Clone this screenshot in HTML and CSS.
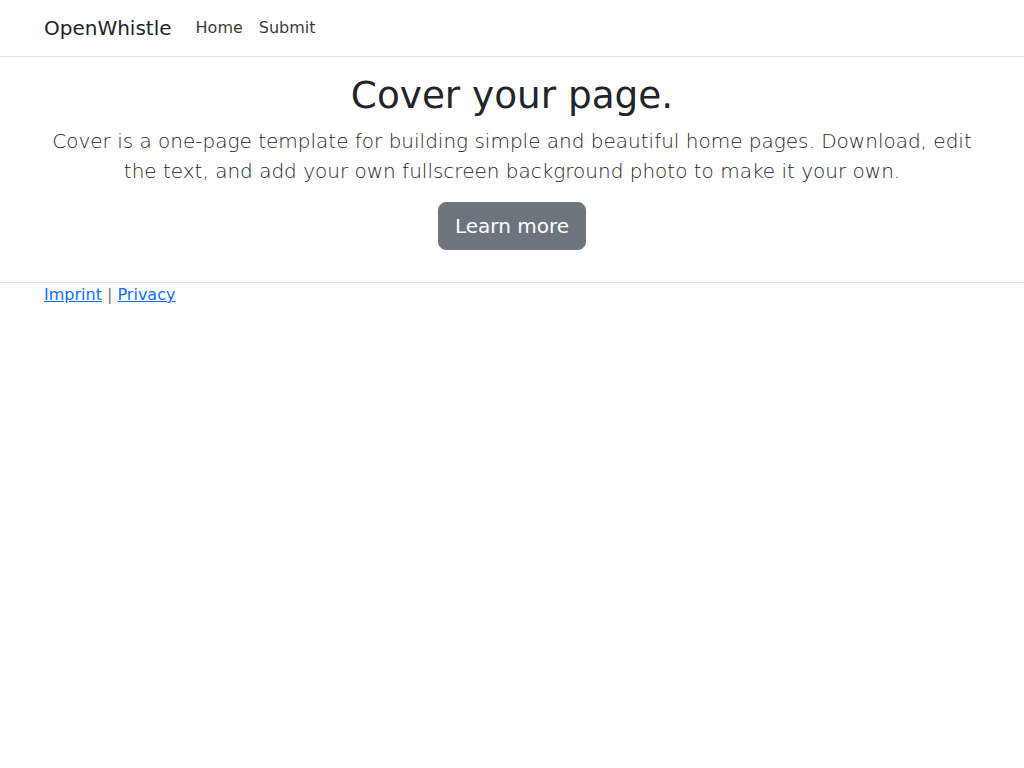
FILE: index.html
```html
<!DOCTYPE html>
<html lang="en">
<head>
<meta charset="utf-8">
<title>OpenWhistle</title>
<link rel="stylesheet" href="styles.css">
</head>
<body>
<header class="navbar">
  <div class="container nav-inner">
    <a class="brand" href="#">OpenWhistle</a>
    <nav class="nav">
      <a class="nav-link" href="#">Home</a>
      <a class="nav-link" href="#">Submit</a>
    </nav>
  </div>
</header>
<main class="container main">
  <h1 class="title">Cover your page.</h1>
  <p class="lead">Cover is a one-page template for building simple and beautiful home pages. Download, edit the text, and add your own fullscreen background photo to make it your own.</p>
  <p class="lead-btn"><a class="btn" href="#">Learn more</a></p>
</main>
<footer class="footer">
  <div class="container">
    <a class="flink" href="#">Imprint</a> <span class="sep">|</span> <a class="flink" href="#">Privacy</a>
  </div>
</footer>
</body>
</html>
```
FILE: styles.css
```css
* { box-sizing: border-box; }
html, body {
  margin: 0;
  padding: 0;
}
body {
  font-family: "DejaVu Sans", sans-serif;
  font-size: 16px;
  line-height: 1.5;
  color: #212529;
  background: #fff;
}
.container {
  max-width: 960px;
  margin: 0 auto;
  padding: 0 12px;
}
.navbar {
  padding: 8px 0;
  border-bottom: 1px solid #dee2e6;
}
.nav-inner {
  display: flex;
  align-items: center;
}
.brand {
  font-size: 20px;
  line-height: 30px;
  padding: 5px 0;
  margin-right: 16px;
  color: #212529;
  text-decoration: none;
}
.nav {
  display: flex;
}
.nav-link {
  padding: 8px;
  color: rgba(0, 0, 0, 0.8);
  text-decoration: none;
}
.main {
  padding-top: 16px;
  padding-bottom: 16px;
  text-align: center;
}
.title {
  margin: 0 0 8px;
  font-size: 37.36px;
  line-height: 1.2;
  font-weight: 500;
}
.lead {
  margin: 0 0 16px;
  font-size: 20px;
  font-weight: 300;
  line-height: 30px;
  color: #212529;
}
.lead-btn {
  margin: 0 0 16px;
}
.btn {
  display: inline-block;
  padding: 8px 16px;
  font-size: 20px;
  line-height: 30px;
  color: #fff;
  background: #6c757d;
  border: 1px solid #6c757d;
  border-radius: 8px;
  text-decoration: none;
}
.footer {
  border-top: 1px solid #dee2e6;
}
.flink {
  color: #0d6efd;
  text-decoration: underline;
}
.sep {
  color: #6c757d;
}
```
